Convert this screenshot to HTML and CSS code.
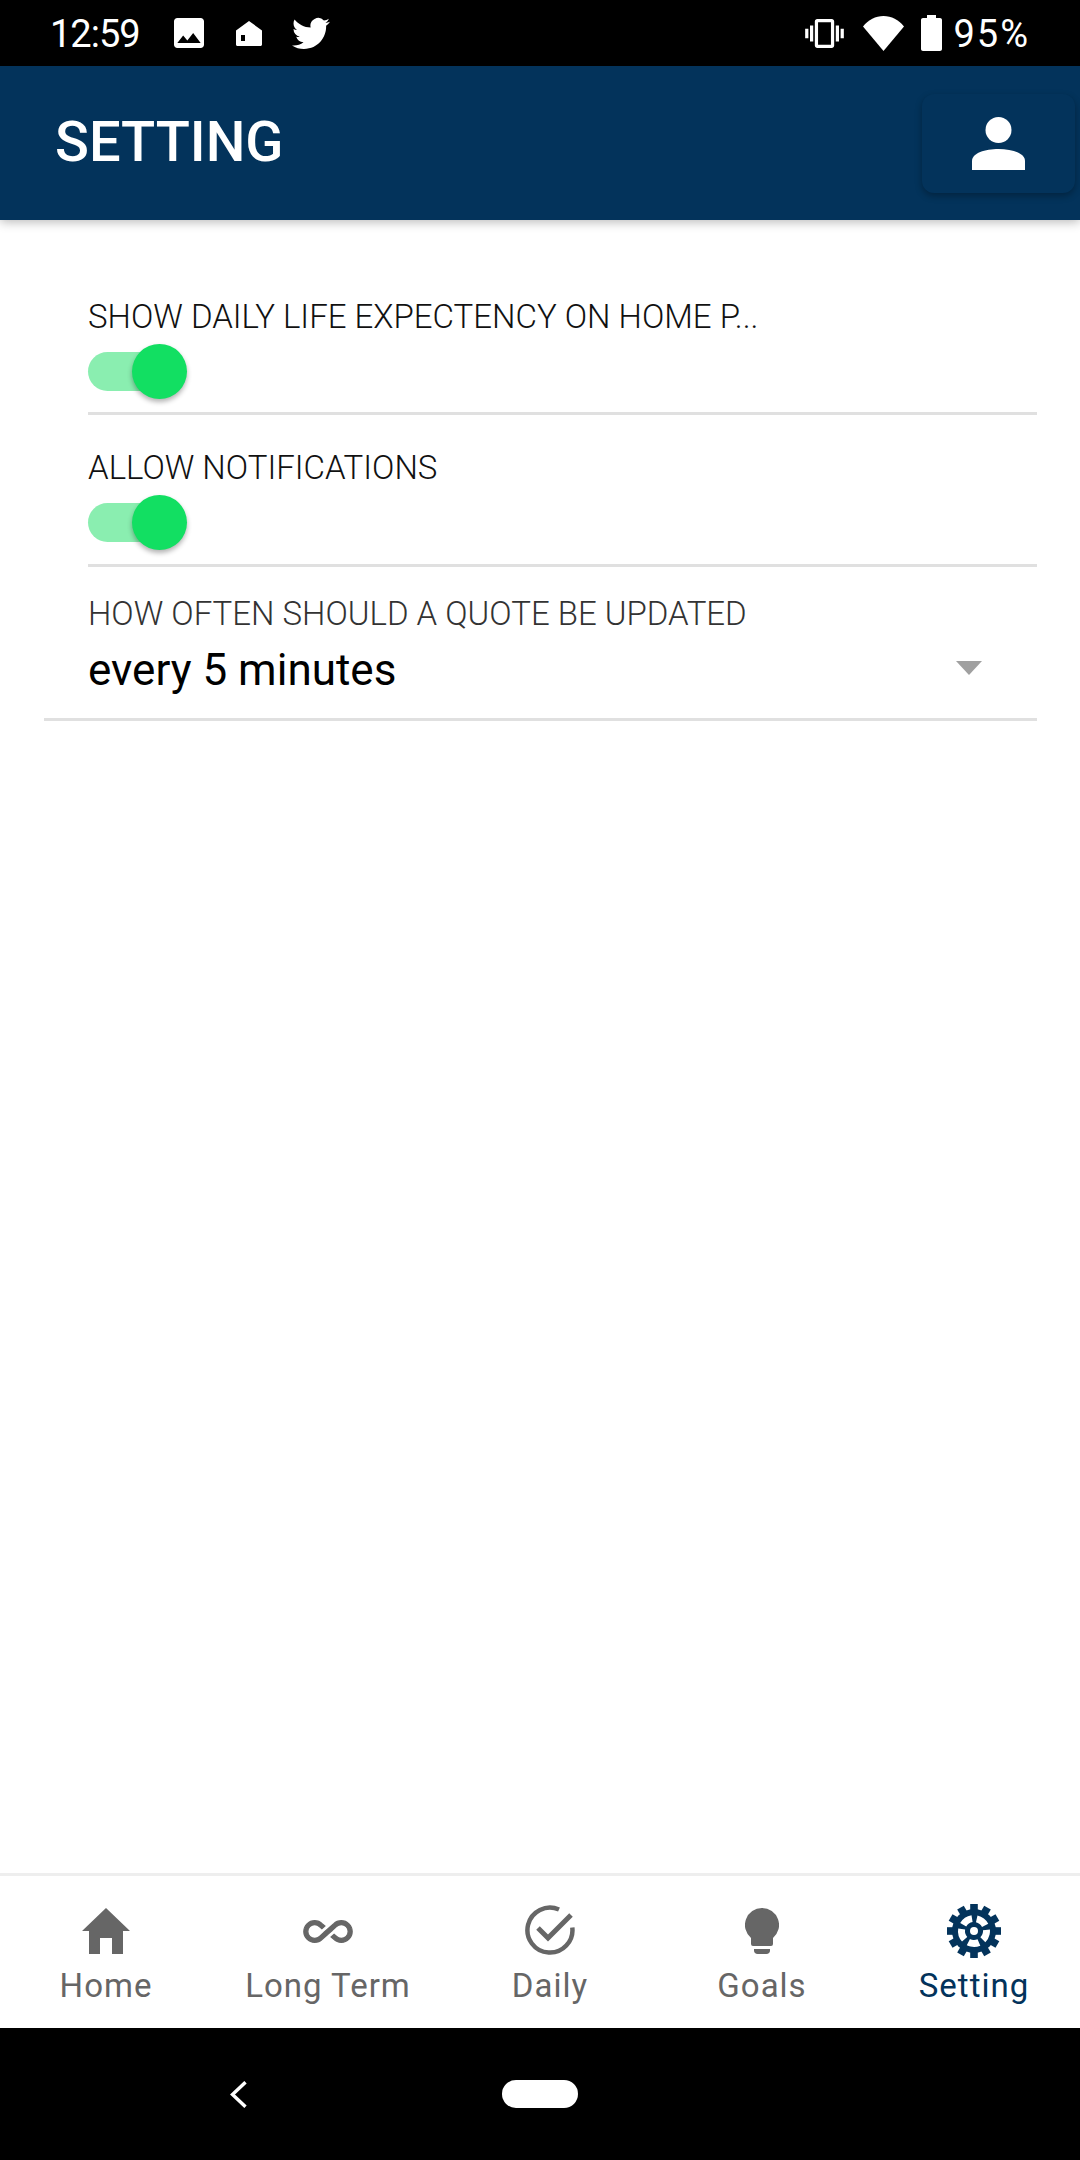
FILE: index.html
```html
<!DOCTYPE html>
<html lang="en">
<head>
<meta charset="utf-8">
<title>Setting</title>
<link rel="stylesheet" href="styles.css">
</head>
<body>
<div class="phone">
  <div class="status">
    <span class="time">12:59</span>
    <svg class="st-image" viewBox="3 3 18 18"><path fill="#fff" d="M21 19V5c0-1.100-.9-2-2-2H5c-1.100 0-2 .9-2 2v14c0 1.100.9 2 2 2h14c1.100 0 2-.9 2-2zM8.500 13.500l2.500 3.010L14.500 12l4.500 6H5l3.500-4.500z"/></svg>
    <svg class="st-home" viewBox="0 0 26 25"><path fill="#fff" fill-rule="evenodd" d="M13 0l13 9.500V23.500c0 .8-.7 1.500-1.500 1.500h-23C.7 25 0 24.300 0 23.500V9.500zM5 14v6h4v-6z"/></svg>
    <svg class="st-bird" viewBox="0 2 24 20"><path fill="#fff" d="M23.953 4.570a10 10 0 01-2.825.775 4.958 4.958 0 002.163-2.723c-.951.555-2.005.959-3.127 1.184a4.920 4.920 0 00-8.384 4.482C7.690 8.095 4.067 6.130 1.640 3.162a4.822 4.822 0 00-.666 2.475c0 1.710.870 3.213 2.188 4.096a4.904 4.904 0 01-2.228-.616v.060a4.923 4.923 0 003.946 4.827 4.996 4.996 0 01-2.212.085 4.936 4.936 0 004.604 3.417 9.867 9.867 0 01-6.102 2.105c-.39 0-.779-.023-1.170-.067a13.995 13.995 0 007.557 2.209c9.053 0 13.998-7.496 13.998-13.985 0-.21 0-.42-.015-.63A9.935 9.935 0 0024 4.590z"/></svg>
    <span class="status-gap"></span>
    <svg class="st-vib" viewBox="0 3 24 18"><path fill="#fff" d="M0 15h2V9H0v6zm3 2h2V7H3v10zm19-8v6h2V9h-2zm-3 8h2V7h-2v10zM16.500 3h-9C6.670 3 6 3.670 6 4.500v15c0 .83.670 1.500 1.500 1.500h9c.83 0 1.500-.670 1.500-1.500v-15c0-.83-.670-1.500-1.500-1.500zM16 19H8V5h8v14z"/></svg>
    <svg class="st-wifi" viewBox="0 0 41 35"><path fill="#fff" d="M20.500 35L0 10.500C5.500 3.800 12.500 0 20.500 0S35.500 3.800 41 10.500z"/></svg>
    <svg class="st-batt" viewBox="0 0 21 36"><path fill="#fff" d="M6 0h9v3h4c1.100 0 2 .9 2 2v29c0 1.100-.9 2-2 2H2c-1.100 0-2-.9-2-2V5c0-1.100.9-2 2-2h4z"/></svg>
    <span class="pct">95%</span>
  </div>

  <header class="appbar">
    <h1 class="title">SETTING</h1>
    <button class="avatar" type="button" aria-label="Profile">
      <svg class="avatar-icon" viewBox="0 0 53 53"><circle cx="26.500" cy="13" r="13" fill="#fff"/><path fill="#fff" d="M0 53v-9c0-8 13-12 26.500-12S53 36 53 44v9z"/></svg>
    </button>
  </header>

  <main class="settings">
    <section class="row">
      <div class="label">SHOW DAILY LIFE EXPECTENCY ON HOME P...</div>
      <div class="toggle"><span class="track"></span><span class="thumb"></span></div>
    </section>
    <section class="row">
      <div class="label">ALLOW NOTIFICATIONS</div>
      <div class="toggle"><span class="track"></span><span class="thumb"></span></div>
    </section>
    <section class="row-select">
      <div class="label label-soft">HOW OFTEN SHOULD A QUOTE BE UPDATED</div>
      <div class="select">
        <span class="value">every 5 minutes</span>
        <span class="caret"></span>
      </div>
    </section>
  </main>

  <nav class="tabs">
    <div class="tab">
      <div class="tab-icon"><svg class="ic-home" viewBox="0 0 48 46"><path fill="#666" d="M24 0l24 23h-7v23H30V30H18v16H7V23H0z"/></svg></div>
      <span class="tab-label">Home</span>
    </div>
    <div class="tab">
      <div class="tab-icon"><svg class="ic-inf" viewBox="-.3 6.300 24.600 11.400"><path fill="#666" stroke="#666" stroke-width=".6" d="M18.600 6.620c-1.440 0-2.800.56-3.770 1.530L12 10.660 10.480 12h.01L7.800 14.390c-.64.64-1.490.99-2.400.99-1.870 0-3.390-1.510-3.390-3.380S3.530 8.620 5.400 8.620c.91 0 1.760.35 2.440 1.030l1.130 1 1.510-1.340L9.220 8.200C8.200 7.180 6.840 6.620 5.400 6.620 2.420 6.620 0 9.040 0 12s2.420 5.380 5.400 5.380c1.440 0 2.800-.56 3.770-1.530l2.830-2.500.01.01L13.520 12h-.01l2.690-2.390c.64-.64 1.490-.99 2.400-.99 1.870 0 3.390 1.510 3.390 3.380s-1.520 3.380-3.390 3.380c-.9 0-1.760-.35-2.440-1.030l-1.140-1.010-1.510 1.340 1.270 1.120c1.020 1.010 2.370 1.570 3.820 1.570 2.980 0 5.400-2.410 5.400-5.380s-2.420-5.370-5.400-5.370z"/></svg></div>
      <span class="tab-label">Long Term</span>
    </div>
    <div class="tab">
      <div class="tab-icon"><svg class="ic-check" viewBox="0 0 52 52"><path fill="none" stroke="#666" stroke-width="4.500" d="M35 4.500A22.500 22.500 0 1 0 48.300 22.500"/><path fill="none" stroke="#666" stroke-width="5" d="M14 23l10 10L47 10"/></svg></div>
      <span class="tab-label">Daily</span>
    </div>
    <div class="tab">
      <div class="tab-icon"><svg class="ic-bulb" viewBox="0 0 34 46"><path fill="#666" d="M17 0a17 17 0 0 1 11 30v6a2 2 0 0 1-2 2H8a2 2 0 0 1-2-2v-6A17 17 0 0 1 17 0z"/><path fill="#666" d="M9 41h16v1.500c0 2-1.500 3.500-3.500 3.500h-9C10.500 46 9 44.500 9 42.500z"/></svg></div>
      <span class="tab-label">Goals</span>
    </div>
    <div class="tab tab-active">
      <div class="tab-icon"><svg class="ic-gear" viewBox="-27 -27 54 54">
        <g fill="#03335b">
          <rect x="-3.800" y="-27" width="7.600" height="54"/>
          <rect x="-3.800" y="-27" width="7.600" height="54" transform="rotate(30)"/>
          <rect x="-3.800" y="-27" width="7.600" height="54" transform="rotate(60)"/>
          <rect x="-3.800" y="-27" width="7.600" height="54" transform="rotate(90)"/>
          <rect x="-3.800" y="-27" width="7.600" height="54" transform="rotate(120)"/>
          <rect x="-3.800" y="-27" width="7.600" height="54" transform="rotate(150)"/>
          <circle r="22"/>
        </g>
        <circle r="12.500" fill="none" stroke="#fff" stroke-width="7" pathLength="100" stroke-dasharray="14 6" transform="rotate(-77.400)"/>
        <circle r="4" fill="#fff"/>
      </svg></div>
      <span class="tab-label">Setting</span>
    </div>
  </nav>

  <div class="sysnav">
    <svg class="back" viewBox="0 0 17 27"><path fill="none" stroke="#fff" stroke-width="3.400" d="M15.500 1.200L2.500 13.500l13 12.300"/></svg>
    <span class="pill"></span>
  </div>
</div>
</body>
</html>
```
FILE: styles.css
```css
* { box-sizing: border-box; }
html, body { margin: 0; padding: 0; }
body { background: #fff; font-family: Roboto, "Liberation Sans", sans-serif; }

.phone {
  width: 1080px;
  height: 2160px;
  display: flex;
  flex-direction: column;
  overflow: hidden;
  background: #fff;
}

/* status bar */
.status {
  height: 66px;
  flex: none;
  background: #000;
  color: #fff;
  display: flex;
  align-items: center;
  padding: 0 50px 0 50px;
  position: relative;
  z-index: 3;
}
.time, .pct { font-size: 38px; line-height: 66px; }
.time { width: 124px; margin-top: 2px; letter-spacing: -1px; }
.st-image { width: 30px; height: 30px; }
.st-home { width: 26px; height: 25px; margin-left: 32px; }
.st-bird { width: 38px; height: 33px; margin-left: 30px; }
.status-gap { flex: 1; }
.st-vib { width: 39px; height: 29px; }
.st-wifi { width: 41px; height: 35px; margin-left: 19px; }
.st-batt { width: 21px; height: 36px; margin-left: 17px; }
.pct { margin-left: 11px; margin-top: 2px; letter-spacing: 2px; }

/* app bar */
.appbar {
  height: 154px;
  flex: none;
  background: #03335b;
  display: flex;
  align-items: flex-start;
  justify-content: space-between;
  padding: 28px 5px 0 55px;
  box-shadow: 0 2px 10px rgba(0, 0, 0, 0.28);
  position: relative;
  z-index: 2;
}
.title {
  margin: 21px 0 0;
  color: #fff;
  font-size: 56px;
  font-weight: 500;
  line-height: 54px;
}
.avatar {
  width: 153px;
  height: 99px;
  border: 0;
  padding: 23px 0 0;
  border-radius: 12px;
  background: #03335b;
  box-shadow: 0 3px 7px rgba(0, 0, 0, 0.3);
  display: flex;
  justify-content: center;
  align-items: flex-start;
}
.avatar-icon { width: 53px; height: 53px; }

/* settings */
.settings {
  flex: 1;
  padding-top: 76px;
  display: flex;
  flex-direction: column;
}
.row {
  margin-left: 88px;
  margin-right: 43px;
  height: 152px;
  padding-top: 32px;
  border-bottom: 3px solid #e0e0e0;
}
.row:first-child { height: 119px; padding-top: 0; }
.label {
  font-size: 33px;
  font-weight: 300;
  line-height: 38px;
  padding-top: 2px;
  color: #111;
  white-space: nowrap;
}
.label-soft { color: #333; }
.toggle {
  position: relative;
  width: 99px;
  height: 55px;
  margin-top: 8px;
  display: flex;
  align-items: center;
}
.track {
  width: 87px;
  height: 39px;
  border-radius: 20px;
  background: #8aeeb0;
}
.thumb {
  position: absolute;
  left: 44px;
  top: 0;
  width: 55px;
  height: 55px;
  border-radius: 50%;
  background: #12df62;
  box-shadow: 0 3px 5px rgba(0, 0, 0, 0.3);
}
.row-select {
  margin-left: 44px;
  margin-right: 43px;
  padding: 26px 0 0 44px;
  height: 154px;
  border-bottom: 3px solid #e0e0e0;
}
.select {
  display: flex;
  align-items: center;
  justify-content: space-between;
  margin-top: 12px;
  padding-right: 55px;
}
.value { font-size: 44px; line-height: 50px; color: #000; }
.caret {
  width: 0;
  height: 0;
  margin-top: -4px;
  border-left: 13.500px solid transparent;
  border-right: 13.500px solid transparent;
  border-top: 14px solid #a0a0a0;
}

/* tabs */
.tabs {
  height: 155px;
  flex: none;
  border-top: 3px solid #eee;
  display: grid;
  grid-template-columns: 212px 232px 212px 212px 212px;
  background: #fff;
}
.tab {
  display: flex;
  flex-direction: column;
  align-items: center;
  color: #666;
}
.tab-icon {
  height: 56px;
  margin-top: 27px;
  display: flex;
  align-items: center;
  justify-content: center;
}
.tab svg { display: block; }
.ic-home { width: 48px; height: 46px; }
.ic-inf { width: 50px; height: 23px; }
.ic-check { width: 52px; height: 52px; }
.ic-bulb { width: 34px; height: 46px; }
.ic-gear { width: 54px; height: 54px; }
.tab-label {
  font-size: 33px;
  line-height: 40px;
  letter-spacing: 1px;
  margin-top: 7px;
  white-space: nowrap;
}
.tab-active { color: #03335b; }

/* system nav */
.sysnav {
  height: 132px;
  flex: none;
  background: #000;
  display: flex;
  align-items: center;
  padding-left: 230px;
}
.back { width: 17px; height: 27px; }
.pill {
  width: 76px;
  height: 28px;
  border-radius: 14px;
  background: #fff;
  margin-left: 255px;
}
```
